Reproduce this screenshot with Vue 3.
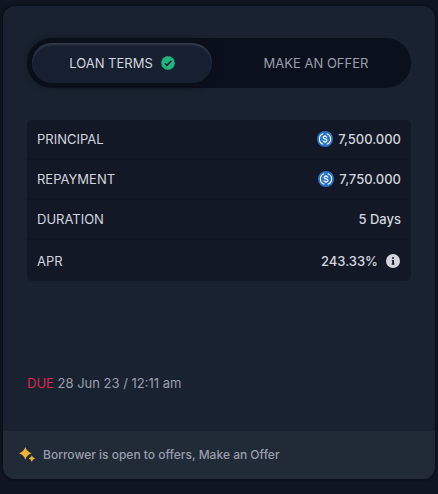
<script setup>
import { ref } from 'vue'

const tab = ref('terms')
const rows = [
  { label: 'PRINCIPAL', value: '7,500.000', coin: true },
  { label: 'REPAYMENT', value: '7,750.000', coin: true },
  { label: 'DURATION', value: '5 Days' },
  { label: 'APR', value: '243.33%', info: true },
]
</script>

<template>
  <main class="page">
    <section class="card">
      <div class="body">
        <div class="toggle">
          <button type="button" class="tab" :class="{ active: tab === 'terms' }" @click="tab = 'terms'">
            LOAN TERMS
            <svg class="check" viewBox="0 0 24 24" aria-hidden="true">
              <circle cx="12" cy="12" r="11.500" fill="#22b67f" />
              <circle cx="12" cy="12" r="11.600" fill="none" stroke="#22b67f" stroke-width="0.800" stroke-dasharray="4.500 2.600" />
              <path fill="none" stroke="#152033" stroke-width="2.600" d="M6.500 12.300l3.700 3.700 7.600-8" />
            </svg>
          </button>
          <button type="button" class="tab" :class="{ active: tab === 'offer' }" @click="tab = 'offer'">
            MAKE AN OFFER
          </button>
        </div>

        <table class="terms">
          <tbody>
            <tr v-for="row in rows" :key="row.label">
              <th scope="row">{{ row.label }}</th>
              <td>
                <span class="value">
                  <svg v-if="row.coin" class="coin" viewBox="0 0 32 32" aria-hidden="true">
                    <circle cx="16" cy="16" r="16" fill="#2775ca" />
                    <path fill="none" stroke="#fff" stroke-width="2.2" d="M12.500 5.500a11 11 0 0 0 0 21M19.500 5.500a11 11 0 0 1 0 21" />
                    <path fill="none" stroke="#fff" stroke-width="2.300" d="M19.800 13.200c-.3-1.900-1.700-2.800-3.800-2.800-2.300 0-3.800 1-3.800 2.700 0 4 7.800 1.500 7.800 5.700 0 1.800-1.600 2.900-4 2.900s-3.900-1-4.200-3M16 8v2.500M16 21.500V24" />
                  </svg>
                  {{ row.value }}
                  <svg v-if="row.info" class="info" viewBox="0 0 14 14" aria-hidden="true">
                    <circle cx="7" cy="7" r="7" fill="#d3d6dd" />
                    <path fill="#121826" d="M6 3.300h2v1.500H6zM5.800 6H8v3.500h.5v1.200H5.600V9.500h.6V7.100h-.4z" />
                  </svg>
                </span>
              </td>
            </tr>
          </tbody>
        </table>

        <p class="due"><span>DUE</span> 28 Jun 23 / 12:11 am</p>
      </div>

      <footer class="note">
        <svg class="sparkle" viewBox="0 0 16 16" aria-hidden="true">
          <path fill="#edb233" d="M6.300 0q1.300 4.500 6.300 6.200-5 1.700-6.300 6.600Q5 7.900 0 6.200q5-1.700 6.300-6.200zM12.800 8.200q.6 2.500 3.200 3.200-2.600.8-3.200 3.600-.6-2.800-3.200-3.600 2.600-.7 3.200-3.200z" />
        </svg>
        Borrower is open to offers, Make an Offer
      </footer>
    </section>
  </main>
</template>

<style>
body {
  background: #0f1521;
}
</style>

<style scoped>
.page {
  padding: 6px 3px 15px;
  font-family: Inter, "Liberation Sans", sans-serif;
  font-size: 13px;
  line-height: 20px;
  color: #d3d6dd;
}

.card {
  border-radius: 12px;
  background: #192230;
  box-shadow: 0 0 3px #05080e;
  overflow: hidden;
}

.body {
  padding: 32px 24px 38px;
}

.toggle {
  display: grid;
  grid-template-columns: 180px 1fr;
  gap: 14px;
  padding: 5px;
  border-radius: 25px;
  background: #0b101d;
}

.tab {
  display: flex;
  align-items: center;
  justify-content: center;
  gap: 8px;
  height: 40px;
  padding: 0;
  border: 0;
  border-radius: 20px;
  background: transparent;
  color: #999fac;
  font: inherit;
  cursor: pointer;
}

.tab.active {
  background: #162030;
  color: #d3d6dd;
  box-shadow: 0 0 7px 3px #0a0f17, inset 0 2px 2px #343b49;
}

.check {
  width: 14px;
  height: 14px;
}

.terms {
  width: 100%;
  margin-top: 32px;
  border-spacing: 0;
  border-radius: 5px;
  background: #121826;
}

th,
td {
  height: 37px;
  padding: 0 10px 2px;
  border-bottom: 1px solid #0f1522;
  font-weight: 400;
  text-align: left;
}

tr:last-child th,
tr:last-child td {
  height: 41px;
  padding-bottom: 0;
  border-bottom: 0;
}

.value {
  display: flex;
  align-items: center;
  justify-content: flex-end;
  gap: 5px;
  font-weight: 500;
}

.coin {
  width: 16px;
  height: 16px;
}

.info {
  width: 14px;
  height: 14px;
  margin: 0 1px 0 3px;
}

.due {
  margin: 92px 0 0;
  color: #999fac;
}

.due span {
  color: #dd264d;
}

.note {
  display: flex;
  align-items: center;
  gap: 8px;
  padding: 14px 16px;
  background: #212a37;
  color: #999fac;
  font-size: 12px;
  font-weight: 500;
}

.sparkle {
  width: 16px;
  height: 16px;
}
</style>
